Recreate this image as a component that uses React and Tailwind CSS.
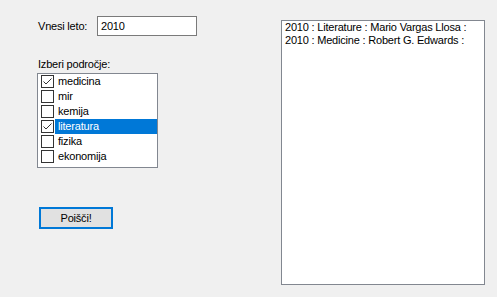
const areas = [
  { name: 'medicina', checked: true },
  { name: 'mir', checked: false },
  { name: 'kemija', checked: false },
  { name: 'literatura', checked: true, selected: true },
  { name: 'fizika', checked: false },
  { name: 'ekonomija', checked: false },
];

const results = [
  '2010 : Literature : Mario Vargas Llosa :',
  '2010 : Medicine : Robert G. Edwards :',
];

function CheckBox({ checked }) {
  return (
    <div className="w-[13px] h-[13px] shrink-0 border border-[#333333] bg-white flex items-center justify-center">
      {checked && (
        <svg width="11" height="11" viewBox="0 0 11 11">
          <polyline points="1.5,5.5 4,8 9.5,2.5" fill="none" stroke="#333333" strokeWidth="1" />
        </svg>
      )}
    </div>
  );
}

export default function App() {
  return (
    <div className="w-[497px] h-[297px] bg-[#f0f0f0] flex items-start pt-[16px] pl-[37px] font-['Liberation_Sans',Arial,sans-serif] text-[11px] leading-[13px] tracking-[-0.2px] text-black">
      {/* Left side */}
      <div className="w-[160px] flex flex-col items-start">
        <div className="flex items-center h-[20px]">
          <span className="w-[60px] pl-px">Vnesi leto:</span>
          <div className="w-[100px] h-[20px] bg-white border border-[#7a7a7a] flex items-center pl-[3px]">
            2010
          </div>
        </div>

        <span className="mt-[22px] pl-px">Izberi področje:</span>

        <div className="mt-[2px] w-[121px] h-[95px] bg-white border border-[#828790] flex flex-col">
          {areas.map((a) => (
            <div key={a.name} className="h-[15px] flex items-center pl-[3px]">
              <CheckBox checked={a.checked} />
              <div
                className={
                  a.selected
                    ? 'ml-px flex-1 h-[15px] flex items-center pl-[3px] bg-[#0078d7] text-white'
                    : 'ml-px flex-1 h-[15px] flex items-center pl-[3px]'
                }
              >
                {a.name}
              </div>
            </div>
          ))}
        </div>

        <button className="mt-[39px] ml-[2px] w-[74px] h-[22px] bg-[#e1e1e1] border-2 border-[#0078d7] flex items-center justify-center">
          Poišči!
        </button>
      </div>

      {/* Results list */}
      <div className="ml-[84px] mt-[4px] w-[204px] h-[265px] bg-white border border-[#828790] pl-[3px] flex flex-col">
        {results.map((r) => (
          <div key={r} className="h-[13px] whitespace-nowrap">
            {r}
          </div>
        ))}
      </div>
    </div>
  );
}
